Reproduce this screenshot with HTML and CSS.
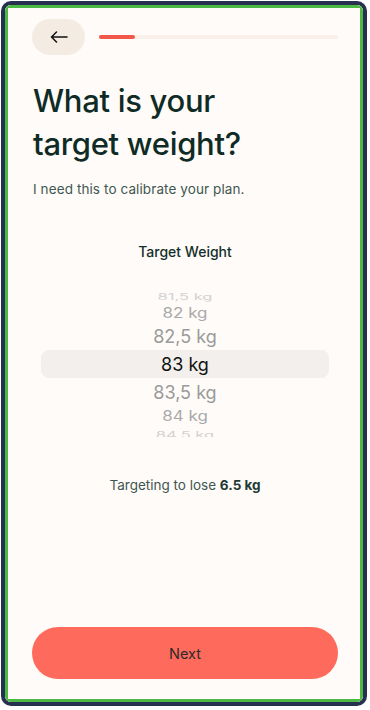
FILE: index.html
```html
<!DOCTYPE html>
<html>
<head>
<meta charset="utf-8">
<link rel="stylesheet" href="styles.css">
</head>
<body>
<div class="frame">
  <div class="screen">
    <div class="topbar">
      <button class="back" aria-label="Back">
        <svg width="18" height="12" viewBox="0 0 18 12"><path d="M17 6H1.5M6.5 1L1.5 6l5 5" fill="none" stroke="#111" stroke-width="1.5" stroke-linecap="round" stroke-linejoin="round"/></svg>
      </button>
      <div class="progress"><div class="progress-fill"></div></div>
    </div>
    <h1 class="title">What is your<br>target weight?</h1>
    <p class="subtitle">I need this to calibrate your plan.</p>
    <div class="label">Target Weight</div>
    <div class="picker">
      <div class="row r-far">81,5 kg</div>
      <div class="row r-mid">82 kg</div>
      <div class="row r-near">82,5 kg</div>
      <div class="row r-sel">83 kg</div>
      <div class="row r-near">83,5 kg</div>
      <div class="row r-mid r-mid-b">84 kg</div>
      <div class="row r-far r-far-b">84,5 kg</div>
    </div>
    <p class="summary">Targeting to lose <b>6.5 kg</b></p>
    <div class="spacer"></div>
    <button class="next">Next</button>
  </div>
</div>
</body>
</html>
```

FILE: styles.css
```css
* { box-sizing: border-box; }
html, body { margin: 0; padding: 0; background: #ffffff; }
body { font-family: "Inter", "DejaVu Sans", sans-serif; }

.frame {
  margin: 1px 3px 4px 1px;
  height: 705px;
  border: 4px solid #27314f;
  border-radius: 10px;
  overflow: hidden;
}
.screen {
  height: 100%;
  border: 3px solid #4cb944;
  background: #fffbf8;
  display: flex;
  flex-direction: column;
  padding: 11px 22px 20px 24px;
}
.topbar {
  display: flex;
  align-items: center;
  gap: 14px;
}
.back {
  width: 53px;
  height: 36px;
  border: none;
  border-radius: 18px;
  background: #f4ece2;
  display: flex;
  align-items: center;
  justify-content: center;
  padding: 0;
}
.progress {
  flex: 1;
  height: 4px;
  border-radius: 2px;
  background: #fbefea;
}
.progress-fill {
  width: 36px;
  height: 100%;
  border-radius: 2px;
  background: #f2584a;
}
.title {
  margin: 24px 0 0 1px;
  font-size: 31px;
  line-height: 43px;
  font-weight: 500;
  color: #0f2b26;
  letter-spacing: -0.3px;
}
.subtitle {
  margin: 16px 0 0 1px;
  font-size: 13.5px;
  letter-spacing: 0.1px;
  color: #3e5752;
}
.label {
  margin-top: 46px;
  text-align: center;
  font-size: 14px;
  font-weight: 500;
  color: #12302a;
}
.picker {
  margin: 31px 9px 0 9px;
  height: 146px;
  overflow: hidden;
  display: flex;
  flex-direction: column;
}
.row {
  flex: none;
  display: flex;
  align-items: center;
  justify-content: center;
  font-size: 18px;
  color: #9c9c9c;
}
.r-far {
  height: 12px;
  font-size: 16.5px;
  color: #d2d2d2;
  transform: scaleY(0.5);
}
.r-far-b { height: 14px; align-items: flex-start; }
.r-mid {
  height: 19px;
  font-size: 17px;
  color: #a9a9a9;
  transform: scaleY(0.82);
}
.r-mid-b { height: 20px; }
.r-near {
  height: 28px;
  color: #9a9a9a;
}
.r-sel {
  height: 28px;
  background: #f2efec;
  border-radius: 8px;
  color: #111111;
}
.summary {
  margin: 40px 0 0 0;
  text-align: center;
  font-size: 13.5px;
  color: #3e5752;
}
.summary b { color: #1d3a34; font-weight: 700; }
.spacer { flex: 1; }
.next {
  height: 52px;
  border: none;
  border-radius: 26px;
  background: #fe6a5b;
  font-family: inherit;
  font-size: 14.5px;
  color: #2a2a2a;
}
```
